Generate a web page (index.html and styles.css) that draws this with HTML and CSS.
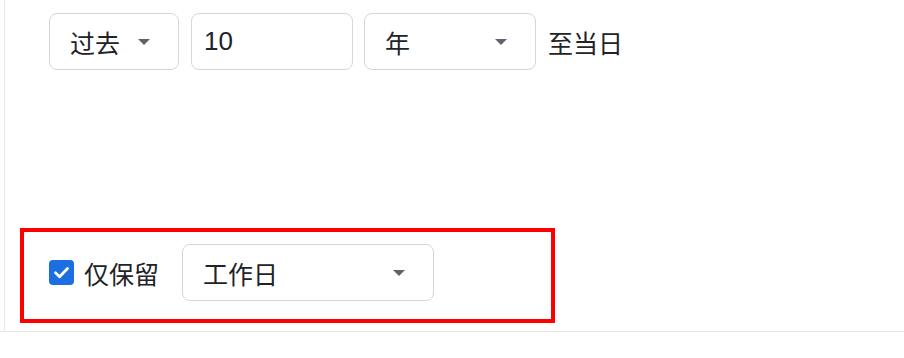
FILE: index.html
```html
<!DOCTYPE html>
<html lang="zh">
<head>
<meta charset="utf-8">
<link rel="stylesheet" href="styles.css">
</head>
<body>
<div class="frame">
  <div class="panel">
    <div class="range-row">
      <div class="select sel-past"><span>过去</span><i class="caret"></i></div>
      <div class="input">10</div>
      <div class="select sel-unit"><span>年</span><i class="caret"></i></div>
      <span class="suffix">至当日</span>
    </div>
    <div class="filter-row">
      <label class="check">
        <span class="box"><svg width="25" height="25" viewBox="0 0 25 25"><path d="M6.5 12.8 L10.6 16.7 L18.5 8.6" fill="none" stroke="#fff" stroke-width="2.8" stroke-linecap="round" stroke-linejoin="round"/></svg></span>
        <span class="check-text">仅保留</span>
      </label>
      <div class="select sel-day"><span>工作日</span><i class="caret"></i></div>
    </div>
  </div>
</div>
</body>
</html>
```

FILE: styles.css
```css
html, body {
  margin: 0;
  padding: 0;
  background: #ffffff;
}
body {
  font-family: "Liberation Sans", "Noto Sans CJK SC", sans-serif;
  font-size: 25px;
  color: #222326;
}
.frame {
  height: 331px;
  border-bottom: 1px solid #e4e4e8;
}
.panel {
  margin-left: 4px;
  height: 100%;
  border-left: 1px solid #e8e8ec;
  display: flex;
  flex-direction: column;
}
.range-row {
  display: flex;
  align-items: center;
  margin: 13px 0 0 44px;
}
.select, .input {
  box-sizing: border-box;
  height: 57px;
  border: 1px solid #d6d6dd;
  border-radius: 8px;
  display: flex;
  align-items: center;
  background: #fff;
}
.select {
  justify-content: space-between;
  padding: 0 28px 0 20px;
}
.sel-past { width: 130px; }
.input {
  width: 162px;
  margin-left: 12px;
  padding-left: 12px;
  font-size: 26px;
}
.sel-unit {
  width: 172px;
  margin-left: 11px;
}
.suffix {
  margin-left: 12px;
}
.caret {
  width: 0;
  height: 0;
  border-left: 6px solid transparent;
  border-right: 6px solid transparent;
  border-top: 6px solid #60636d;
}
.filter-row {
  box-sizing: border-box;
  width: 535px;
  margin: 158px 0 0 15px;
  padding: 12px 0 18px 25px;
  border: 4px solid #ff0000;
  display: flex;
  align-items: center;
}
.check {
  display: flex;
  align-items: center;
}
.box {
  width: 25px;
  height: 25px;
  border-radius: 4px;
  background: #1b6fe0;
  display: flex;
}
.check-text {
  margin-left: 10px;
}
.sel-day {
  width: 252px;
  margin-left: 23px;
}
```
